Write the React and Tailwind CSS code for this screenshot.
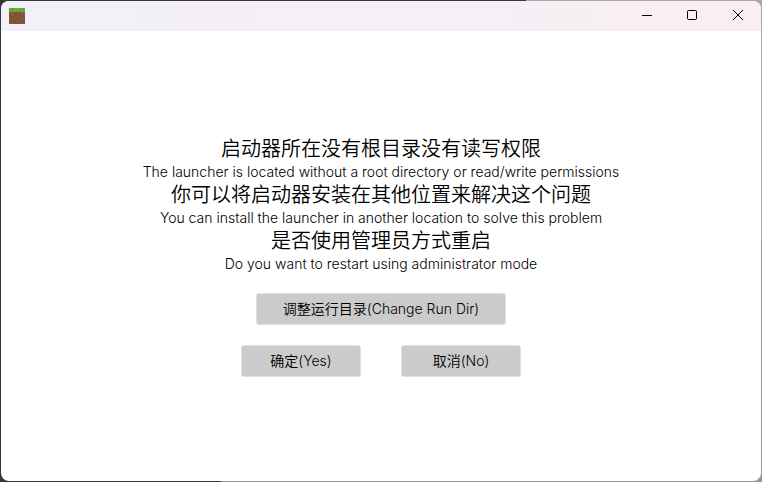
const TEXT_FONT = "font-['Inter','Noto_Sans_CJK_SC',sans-serif]";

const messages = [
  {
    zh: "启动器所在没有根目录没有读写权限",
    en: "The launcher is located without a root directory or read/write permissions",
  },
  {
    zh: "你可以将启动器安装在其他位置来解决这个问题",
    en: "You can install the launcher in another location to solve this problem",
  },
  {
    zh: "是否使用管理员方式重启",
    en: "Do you want to restart using administrator mode",
  },
];

const GRASS = ["#5fa83c", "#6bb545", "#559f38", "#63ae40"];
const DIRT = ["#85583b", "#7b5239", "#8b5f42", "#764d33", "#7f5539"];

function GrassBlockIcon() {
  const cells = [];
  for (let y = 0; y < 16; y++) {
    for (let x = 0; x < 16; x++) {
      const seed = (x * 7 + y * 13 + x * y * 3) % 11;
      const fill = y < 4 ? GRASS[seed % 4] : DIRT[seed % 5];
      cells.push(<rect key={`${x}-${y}`} x={x} y={y} width="1" height="1" fill={fill} />);
    }
  }
  return (
    <svg className="size-4" viewBox="0 0 16 16" shapeRendering="crispEdges" aria-hidden="true">
      {cells}
    </svg>
  );
}

function CaptionButton({ label, children }) {
  return (
    <button type="button" aria-label={label} className="flex h-7 w-[46px] items-center justify-center text-black">
      <svg className="size-3" viewBox="0 0 12 12" fill="none" stroke="currentColor" aria-hidden="true">
        {children}
      </svg>
    </button>
  );
}

function TitleBar() {
  return (
    <header className="flex h-[30px] items-center justify-between bg-linear-to-r from-[#f2f0f8] via-[#f6eff7] to-[#f9eef2] pl-2">
      <GrassBlockIcon />
      <div className="flex h-full items-start">
        <CaptionButton label="Minimize">
          <path d="M2 6.5h10" />
        </CaptionButton>
        <CaptionButton label="Maximize">
          <rect x="1.5" y="1.5" width="9" height="9" rx="1" />
        </CaptionButton>
        <CaptionButton label="Close">
          <path d="M1 1l10 10M11 1L1 11" />
        </CaptionButton>
      </div>
    </header>
  );
}

function ActionButton({ className, children }) {
  return (
    <button
      type="button"
      className={`h-8 rounded-[3px] border border-[#e0e0e0] bg-[#cbcbcb] text-sm text-black ${className}`}
    >
      {children}
    </button>
  );
}

export default function App() {
  return (
    <div
      className={`flex min-h-screen bg-[linear-gradient(to_right,#39363a_69%,#a9a8ab_69%),linear-gradient(to_right,#39363a_29%,#989698_29%)] bg-[length:100%_50%,100%_100%] bg-no-repeat p-px ${TEXT_FONT}`}
    >
      <div className="flex flex-1 flex-col overflow-hidden rounded-lg bg-white">
        <TitleBar />
        <main className="flex flex-1 flex-col items-center justify-center gap-5 font-[350] text-black">
          <div className="text-center">
            {messages.map(({ zh, en }) => (
              <div key={zh}>
                <p className="text-xl leading-7">{zh}</p>
                <p className="text-sm leading-[18px] font-light">{en}</p>
              </div>
            ))}
          </div>
          <ActionButton className="w-[250px]">调整运行目录(Change Run Dir)</ActionButton>
          <div className="flex gap-10">
            <ActionButton className="w-[120px]">确定(Yes)</ActionButton>
            <ActionButton className="w-[120px]">取消(No)</ActionButton>
          </div>
        </main>
      </div>
    </div>
  );
}
